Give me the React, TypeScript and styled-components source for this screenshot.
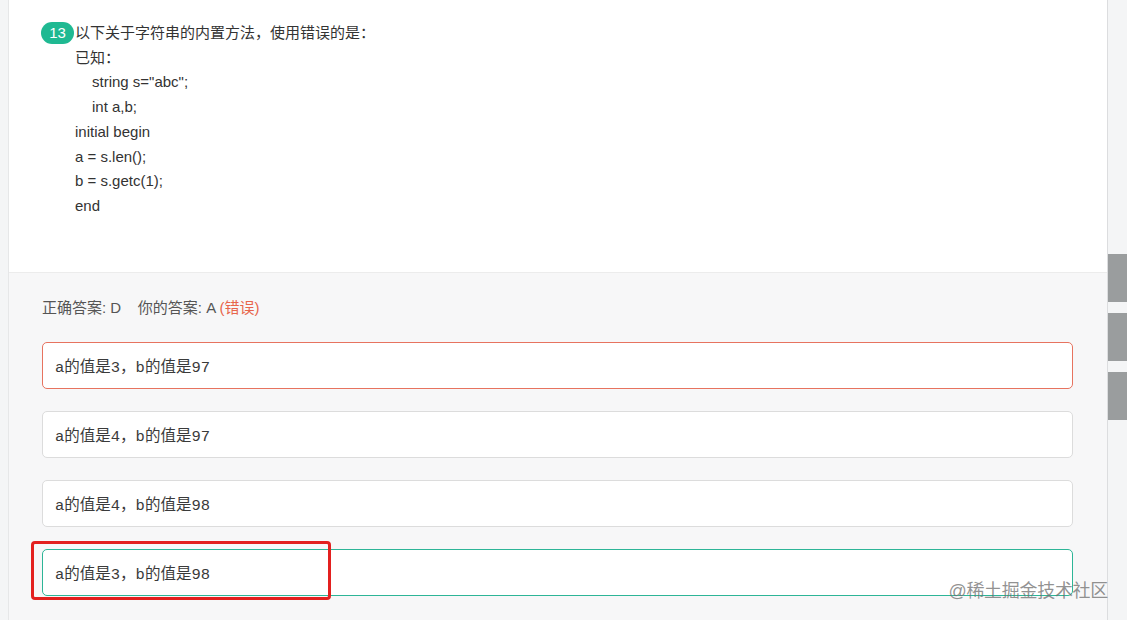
import React from "react";
import styled, { createGlobalStyle } from "styled-components";

const Global = createGlobalStyle`
  html, body { margin: 0; padding: 0; background: #f4f5f6; }
  body { font-family: "Liberation Sans", "Noto Sans CJK SC", sans-serif; }
`;

const Page = styled.div`
  position: relative;
  display: flex;
  width: 1127px;
  height: 620px;
  padding-left: 8px;
  box-sizing: border-box;
  background: #f4f5f6;
  overflow: hidden;
`;

const Card = styled.div`
  width: 1100px;
  display: flex;
  flex-direction: column;
  border-left: 1px solid #e6e7e8;
  border-right: 1px solid #dcdddf;
  box-sizing: border-box;
`;

const Question = styled.div`
  background: #fff;
  height: 273px;
  box-sizing: border-box;
  padding: 21px 0 0 32px;
  border-bottom: 1px solid #ececec;
  color: #333;
  font-size: 15px;
  line-height: 24.7px;
`;

const Line = styled.div<{ $indent?: number }>`
  display: flex;
  align-items: center;
  padding-left: ${(p) => 34 + (p.$indent ?? 0)}px;
  white-space: pre;
`;

const FirstLine = styled.div`
  display: flex;
  align-items: center;
  gap: 1px;
`;

const Badge = styled.span`
  display: inline-flex;
  align-items: center;
  justify-content: center;
  width: 33px;
  height: 22px;
  border-radius: 11px;
  background: #1fb992;
  color: #fff;
  font-size: 15px;
  line-height: 22px;
`;

const Answers = styled.div`
  flex: 1;
  background: #f7f7f8;
  padding: 25px 34px 0 33px;
  display: flex;
  flex-direction: column;
  gap: 22px;
`;

const Result = styled.div`
  font-size: 15px;
  line-height: 20px;
  color: #555;
  margin-bottom: 2px;
  white-space: pre;
`;

const Wrong = styled.span`
  color: #e8654b;
`;

const Option = styled.div<{ $tone: "wrong" | "right" | "plain" }>`
  position: relative;
  height: 47px;
  box-sizing: border-box;
  display: flex;
  align-items: center;
  padding: 0 12px;
  background: #fff;
  border-radius: 5px;
  border: 1px solid
    ${(p) => (p.$tone === "wrong" ? "#e7735f" : p.$tone === "right" ? "#2db597" : "#dcdcdc")};
  font-family: "Liberation Mono", "Noto Sans CJK SC", monospace;
  font-size: 15.5px;
  color: #3a3a3a;
`;

const Highlight = styled.div`
  position: absolute;
  left: -12px;
  top: -9px;
  width: 300px;
  height: 59px;
  border: 3px solid #e3201f;
  border-radius: 4px;
  box-sizing: border-box;
  pointer-events: none;
`;

const Gutter = styled.div`
  width: 19px;
  display: flex;
  flex-direction: column;
  padding-top: 254px;
  gap: 11px;
`;

const Tab = styled.div`
  height: 48px;
  background: #9a9d9e;
`;

const Watermark = styled.div`
  position: absolute;
  right: 19px;
  bottom: 18px;
  font-size: 18px;
  line-height: 22px;
  color: rgba(110, 110, 110, 0.75);
  letter-spacing: -0.3px;
`;

const options: { text: string; tone: "wrong" | "right" | "plain" }[] = [
  { text: "a的值是3，b的值是97", tone: "wrong" },
  { text: "a的值是4，b的值是97", tone: "plain" },
  { text: "a的值是4，b的值是98", tone: "plain" },
  { text: "a的值是3，b的值是98", tone: "right" },
];

export default function App() {
  return (
    <>
      <Global />
      <Page>
        <Card>
          <Question>
            <FirstLine>
              <Badge>13</Badge>
              <span>以下关于字符串的内置方法，使用错误的是：</span>
            </FirstLine>
            <Line>已知：</Line>
            <Line $indent={17}>string s="abc";</Line>
            <Line $indent={17}>int a,b;</Line>
            <Line>initial begin</Line>
            <Line>a = s.len();</Line>
            <Line>b = s.getc(1);</Line>
            <Line>end</Line>
          </Question>
          <Answers>
            <Result>
              正确答案: D{"    "}你的答案: A <Wrong>(错误)</Wrong>
            </Result>
            {options.map((o, i) => (
              <Option key={i} $tone={o.tone}>
                {o.text}
                {o.tone === "right" && <Highlight />}
              </Option>
            ))}
          </Answers>
        </Card>
        <Gutter>
          <Tab />
          <Tab />
          <Tab />
        </Gutter>
        <Watermark>@稀土掘金技术社区</Watermark>
      </Page>
    </>
  );
}
